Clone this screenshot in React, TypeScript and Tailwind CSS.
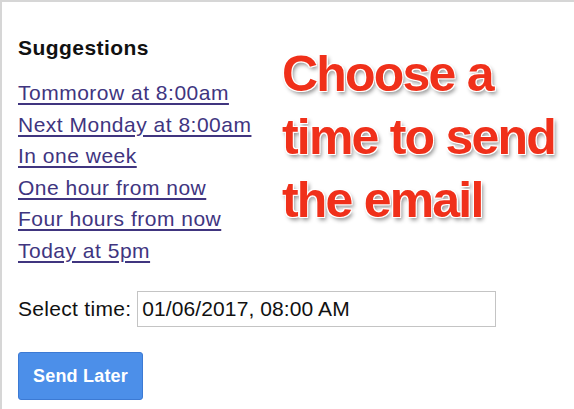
export default function App() {
  const links = [
    "Tommorow at 8:00am",
    "Next Monday at 8:00am",
    "In one week",
    "One hour from now",
    "Four hours from now",
    "Today at 5pm",
  ];
  return (
    <div className="w-[574px] h-[409px] bg-white border-t-2 border-l-2 border-[#d6d6d6] overflow-hidden font-['Liberation_Sans',Arial,sans-serif]">
      <div className="pl-[16px] pt-[34px]">
        <div className="flex">
          <div className="w-[264px] shrink-0">
            <div className="text-[21px] leading-[24px] font-bold text-[#111] tracking-[0.45px]">
              Suggestions
            </div>
            <div className="mt-[17px] flex flex-col">
              {links.map((l) => (
                <a
                  key={l}
                  href="#"
                  className="text-[21px] leading-[31.5px] text-[#40357f] underline decoration-[#40357f] underline-offset-[3px] tracking-[0.5px] w-fit"
                >
                  {l}
                </a>
              ))}
            </div>
          </div>
          <div className="mt-[7px] text-[50px] leading-[63px] font-bold text-[#f0301a] tracking-[-1.8px] [text-shadow:-1px_-1px_0_#fff,1px_-1px_0_#fff,-1px_1px_0_#fff,1px_1px_0_#fff,2px_3px_4px_rgba(0,0,0,0.45)]">
            <div>Choose a</div>
            <div>time to send</div>
            <div>the email</div>
          </div>
        </div>
        <div className="mt-[25px] flex items-center gap-[6px]">
          <span className="text-[21px] text-[#111] tracking-[0.3px]">Select time:</span>
          <div className="w-[359px] h-[36px] border border-[#c4c4c4] flex items-center pl-[4px] text-[21px] text-[#111] tracking-[0.1px]">
            01/06/2017, 08:00 AM
          </div>
        </div>
        <button className="mt-[25px] w-[125px] h-[48px] bg-[#4c8fe9] border border-[#3c7ad4] rounded-[3px] text-white font-bold text-[18px] tracking-[0.2px] flex items-center justify-center">
          Send Later
        </button>
      </div>
    </div>
  );
}
